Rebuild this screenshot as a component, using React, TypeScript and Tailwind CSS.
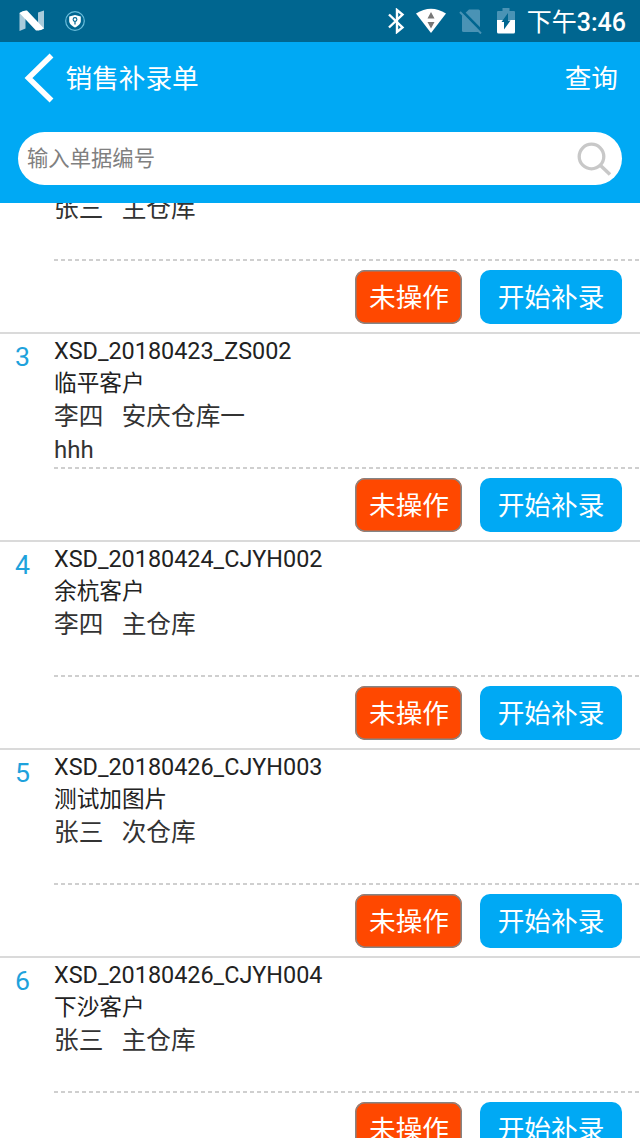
import { useState } from 'react';

interface Order {
  id: number;
  no?: number;
  code?: string;
  customer?: string;
  clerk: string;
  warehouse: string;
  memo?: string;
}

const ORDERS: Order[] = [
  { id: 2, clerk: '张三', warehouse: '主仓库' },
  { id: 3, no: 3, code: 'XSD_20180423_ZS002', customer: '临平客户', clerk: '李四', warehouse: '安庆仓库一', memo: 'hhh' },
  { id: 4, no: 4, code: 'XSD_20180424_CJYH002', customer: '余杭客户', clerk: '李四', warehouse: '主仓库' },
  { id: 5, no: 5, code: 'XSD_20180426_CJYH003', customer: '测试加图片', clerk: '张三', warehouse: '次仓库' },
  { id: 6, no: 6, code: 'XSD_20180426_CJYH004', customer: '下沙客户', clerk: '张三', warehouse: '主仓库' },
];

function StatusBar() {
  return (
    <div className="flex h-[42px] shrink-0 items-center bg-[#006690] text-white">
      <svg className="ml-[19px] h-[22px] w-[26px]" viewBox="0 0 26 22">
        <path d="M0.500 3l6-2v17.500l-6 2.500z" fill="#a9cbdb" />
        <path d="M19 2.500l6-2v18l-6 2z" fill="#a9cbdb" />
        <path d="M0.500 3Q4 0 8 0.500L25 18.500q-3 2.500-8 2z" fill="#fff" />
      </svg>
      <svg className="ml-[20px] h-5 w-5" viewBox="0 0 20 20" fill="none">
        <circle cx="10" cy="10" r="9.300" stroke="#69bddb" strokeWidth="1.200" />
        <path d="M10 4l5.800 1.500V10c0 3-2.800 5-5.800 6.500C7 15 4.200 13 4.200 10V5.500z" fill="#fff" />
        <circle cx="10" cy="8.500" r="1.900" stroke="#006690" strokeWidth="1.100" />
        <path d="M10 10.500v3" stroke="#006690" strokeWidth="1.200" />
      </svg>
      <div className="ml-auto flex items-center pr-[14px]">
        <svg className="h-[26px] w-[18px]" viewBox="0 0 18 26" fill="none" stroke="#fff" strokeWidth="2.400">
          <path d="M2 6.500l13.500 13L10 24V2l5.500 4.500L2 19.500" />
        </svg>
        <svg className="ml-[10px] h-[26px] w-[32px]" viewBox="0 0 32 26">
          <path d="M1 5.500Q16-4 31 5.500L16 25z" fill="#fff" />
          <path d="M16 4l3.500 6.500h-7zM16 20.500l3.500-6.500h-7z" fill="#777" />
        </svg>
        <svg className="ml-[12px] h-[26px] w-[24px]" viewBox="0 0 24 26">
          <path d="M10 1.500h9.500q1.500 0 1.500 1.500v21H4.500Q3 24 3 22.500V8z" fill="#4a93b5" />
          <path d="M2.500 2.500l21.500 22" stroke="#006690" strokeWidth="3" />
          <path d="M1 4l21 21.500" stroke="#4a93b5" strokeWidth="2" />
        </svg>
        <svg className="ml-[14px] h-[26px] w-[18px]" viewBox="0 0 18 26">
          <path d="M5.500 0h7v3H17q1 0 1 1v9H0V4q0-1 1-1h4.500z" fill="#4a93b5" />
          <path d="M0 12h18v12q0 1.500-1.500 1.500h-15Q0 25.500 0 24z" fill="#fff" />
          <path d="M11 5v7.500h2.500L7 21.500V14H4.500z" fill="#006690" />
        </svg>
        <span className="ml-[12px] pt-[3px] text-[25px] leading-[39px] font-medium whitespace-nowrap">
          <span className="font-normal">下午</span>3:46
        </span>
      </div>
    </div>
  );
}

function OrderRow({ order }: { order: Order }) {
  return (
    <li className="flex h-[208px] shrink-0 border-b-2 border-[#dadada] pt-[2px]">
      <span className="w-[54px] shrink-0 pt-[5px] pl-[15px] text-[26.670px] leading-8 text-[#1ea2dc]">{order.no}</span>
      <div className="flex flex-1 flex-col whitespace-pre text-[#333]">
        <p className="h-8 text-[23.400px] leading-[31px] text-[#222]">{order.code}</p>
        <p className="h-8 text-[22.670px] leading-8 text-[#222]">{order.customer}</p>
        <p className="h-[34px] text-[24.670px] leading-[34px]">{`${order.clerk}   ${order.warehouse}`}</p>
        <p className="h-[33px] text-[24px] leading-8">{order.memo}</p>
        <div className="h-[1.500px] shrink-0 bg-[repeating-linear-gradient(90deg,#cfcfcf_0_4px,transparent_4px_7px)]" />
        <div className="mt-[9.500px] flex justify-end gap-[18px] pr-[18px] text-[26.670px] text-white">
          <button className="h-[54px] w-[107px] rounded-[10px] bg-[#ff4800] leading-[54px] shadow-[inset_0_0_0_1.500px_#858585]">
            <span className="block pt-px pl-px">未操作</span>
          </button>
          <button className="h-[54px] w-[142px] rounded-[10px] bg-[#00a9f4] leading-[54px]">
            <span className="block pt-px">开始补录</span>
          </button>
        </div>
      </div>
    </li>
  );
}

export default function App() {
  const [keyword, setKeyword] = useState('');

  return (
    <div className="flex h-[1138px] w-[640px] flex-col overflow-hidden bg-white font-[Roboto,'Noto_Sans_CJK_SC',sans-serif]">
      <StatusBar />
      <header className="h-[161px] shrink-0 bg-[#00a9f4] text-[26.670px] text-white">
        <div className="flex h-[72px] items-center pr-[22px] pl-6">
          <svg className="h-[50px] w-[30px]" viewBox="0 0 30 50" fill="none" stroke="#fff" strokeWidth="5.500">
            <path d="M27.500 2.500L4.500 25l23 22.500" />
          </svg>
          <h1 className="ml-[11.500px] pt-[2px]">销售补录单</h1>
          <button className="ml-auto pt-[2px]">查询</button>
        </div>
        <div className="mx-[18px] mt-[18px] flex h-[53px] items-center rounded-full bg-white pr-[10px] pl-[9px]">
          <input
            className="min-w-0 flex-1 text-[21.330px] text-[#333] outline-none placeholder:text-[#808080]"
            placeholder="输入单据编号"
            value={keyword}
            onChange={(e) => setKeyword(e.target.value)}
          />
          <svg className="h-[36px] w-[36px]" viewBox="0 0 36 36" fill="none" stroke="#c8c8c8">
            <circle cx="15.500" cy="15.500" r="12.300" strokeWidth="3.300" />
            <path d="M24 24l10 9.500" strokeWidth="3.500" />
          </svg>
        </div>
      </header>
      <main className="min-h-0 flex-1 overflow-hidden">
        {/* list is scrolled part way through the first visible row */}
        <ul className="-mt-[77px] flex flex-col">
          {ORDERS.map((order) => (
            <OrderRow key={order.id} order={order} />
          ))}
        </ul>
      </main>
    </div>
  );
}
